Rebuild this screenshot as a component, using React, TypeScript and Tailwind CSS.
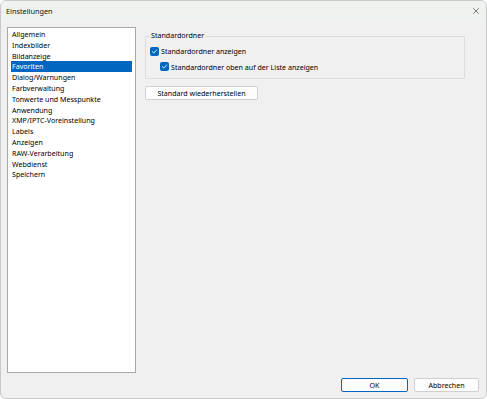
import { X } from "lucide-react";

const items = [
  "Allgemein",
  "Indexbilder",
  "Bildanzeige",
  "Favoriten",
  "Dialog/Warnungen",
  "Farbverwaltung",
  "Tonwerte und Messpunkte",
  "Anwendung",
  "XMP/IPTC-Voreinstellung",
  "Labels",
  "Anzeigen",
  "RAW-Verarbeitung",
  "Webdienst",
  "Speichern",
];

function Check() {
  return (
    <span className="flex w-[9px] h-[9px] shrink-0 items-center justify-center rounded-[2px] bg-[#0067c0]">
      <svg width="7" height="7" viewBox="0 0 8 8" fill="none">
        <path d="M1.5 4.2 L3.2 5.8 L6.5 2.2" stroke="#fff" strokeWidth="1" strokeLinecap="round" strokeLinejoin="round" />
      </svg>
    </span>
  );
}

export default function App() {
  return (
    <div className="w-[487px] h-[399px] bg-white" style={{ fontFamily: '"Noto Sans", "Open Sans", sans-serif' }}>
      <div className="flex h-[399px] w-[487px] flex-col overflow-hidden rounded-[6px] border border-[#c9c9c9] bg-[#f0f0f0] text-[7.1px] text-black">
        {/* Title bar */}
        <div className="flex h-[20px] shrink-0 items-center justify-between bg-[#eef3f0] pl-[5px] pr-[5px]">
          <span className="text-[7.3px] text-[#111]">Einstellungen</span>
          <X className="size-[10px] text-[#333]" strokeWidth={1.5} />
        </div>

        {/* Content */}
        <div className="flex flex-1 gap-[9px] pl-[6px] pt-[6px]">
          <div className="h-[346px] w-[129px] border border-[#a8a8a8] bg-white px-[3px] pt-[1px]">
            {items.map((it) => (
              <div
                key={it}
                className={`h-[10.8px] pl-[1px] leading-[10.8px] ${
                  it === "Favoriten" ? "bg-[#0067c0] text-white" : ""
                }`}
              >
                {it}
              </div>
            ))}
          </div>

          <div className="flex flex-col pt-[2px]">
            <div className="relative mt-[7px] h-[43px] w-[320px] rounded-[2px] border border-[#dcdcdc]">
              <span className="absolute left-[4px] top-[-7px] bg-[#f0f0f0] px-[1px] leading-[11px]">Standardordner</span>
              <div className="flex flex-col gap-[5px] pl-[4px] pt-[9px]">
                <div className="flex items-center gap-[2px]">
                  <Check />
                  <span>Standardordner anzeigen</span>
                </div>
                <div className="flex items-center gap-[2px] pl-[10px]">
                  <Check />
                  <span>Standardordner oben auf der Liste anzeigen</span>
                </div>
              </div>
            </div>
            <button className="mt-[7px] h-[14px] w-[113px] rounded-[2px] border border-[#d0d0d0] bg-[#fdfdfd] text-center leading-[12px]">
              Standard wiederherstellen
            </button>
          </div>
        </div>

        {/* Footer */}
        <div className="flex h-[26px] shrink-0 justify-end gap-[6px] pr-[7px] pt-[5px]">
          <button className="h-[14px] w-[67px] rounded-[2px] border border-[#0067c0] bg-[#fdfdfd] leading-[12px]">OK</button>
          <button className="h-[14px] w-[65px] rounded-[2px] border border-[#d0d0d0] bg-[#fdfdfd] leading-[12px]">Abbrechen</button>
        </div>
      </div>
    </div>
  );
}
